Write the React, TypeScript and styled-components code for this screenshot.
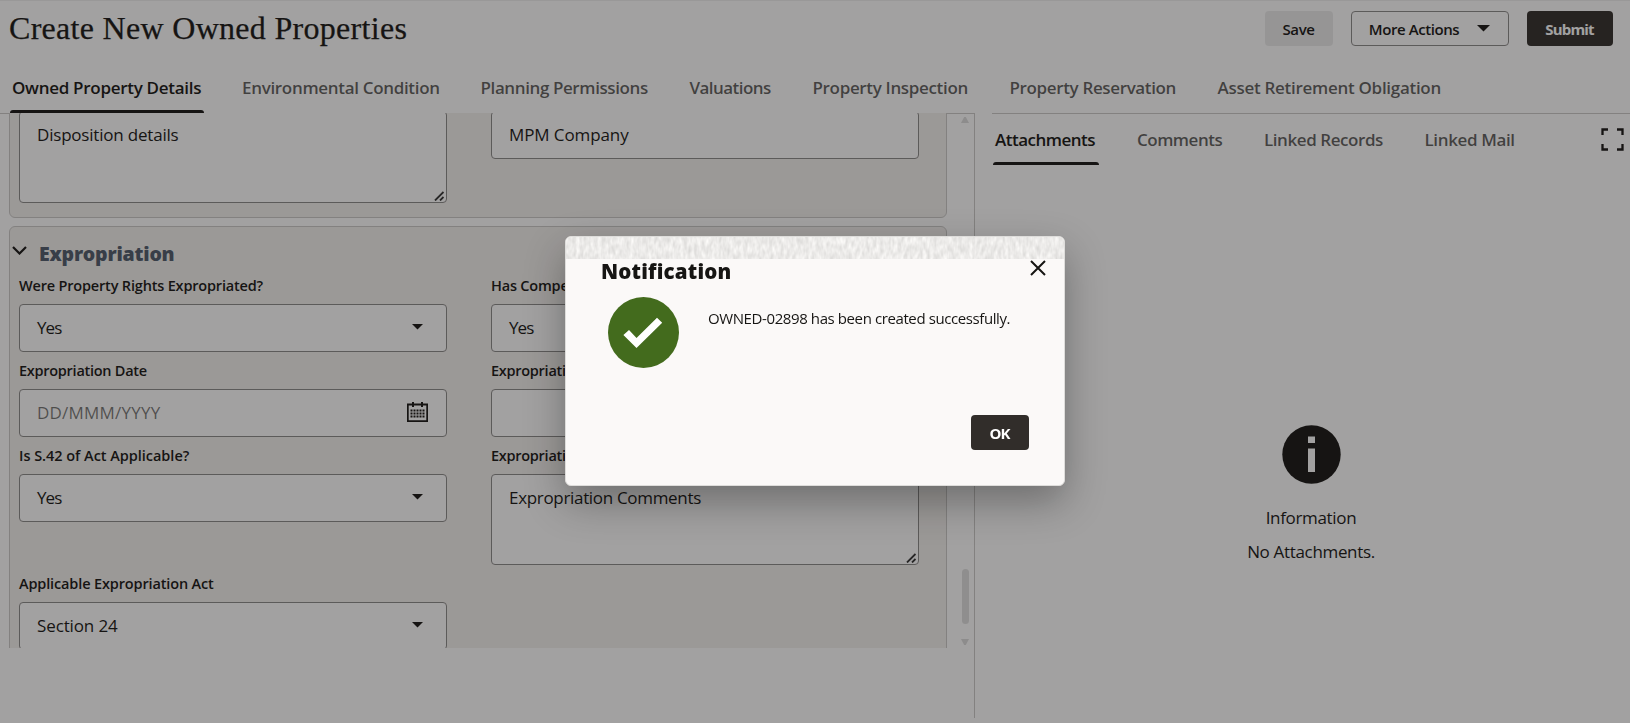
import React from 'react';
import styled, { createGlobalStyle } from 'styled-components';

const ink = '#161513';
const sans = '"Open Sans", "Noto Sans", sans-serif';

const GlobalStyle = createGlobalStyle`
  * { box-sizing: border-box; }
  body { margin: 0; background: #fff; color: ${ink}; font-family: ${sans}; overflow: hidden; }
  button { font-family: ${sans}; cursor: pointer; }
  h1, h2, p { margin: 0; }
`;

const Page = styled.div`
  height: 723px;
  display: flex;
  flex-direction: column;
  border-top: 1px solid #f1f1f1;
  white-space: nowrap;
`;

const Header = styled.header`
  height: 56px;
  display: flex;
  align-items: flex-start;
  justify-content: space-between;
  padding: 10px 17px 0 9px;
`;

const Title = styled.h1`
  font: 400 32px/35px "Liberation Serif", serif;
  letter-spacing: 0.3px;
  -webkit-text-stroke: 0.25px ${ink};
`;

const Actions = styled.div`
  display: flex;
  gap: 18px;
`;

const Button = styled.button<{ $kind: 'plain' | 'outline' | 'solid'; $w: number }>`
  width: ${(p) => p.$w}px;
  height: 35px;
  display: flex;
  align-items: center;
  justify-content: center;
  gap: 18px;
  padding: 0 1px 0 0;
  border: 1px solid ${(p) => (p.$kind === 'outline' ? '#8b8a89' : 'transparent')};
  border-radius: 4px;
  background: ${(p) => ({ plain: '#ececec', outline: '#fff', solid: '#312d2a' })[p.$kind]};
  background-clip: border-box;
  background-origin: border-box;
  color: ${(p) => (p.$kind === 'solid' ? '#fff' : ink)};
  font-size: 15px;
  font-weight: ${(p) => (p.$kind === 'solid' ? 700 : 600)};
  letter-spacing: ${(p) => (p.$kind === 'solid' ? -0.85 : -0.42)}px;
`;

const TabBar = styled.nav<{ $compact?: boolean }>`
  height: ${(p) => (p.$compact ? 51 : 56)}px;
  display: flex;
  flex: 1;
  gap: 36px;
  padding-left: ${(p) => (p.$compact ? 0.5 : 9.5)}px;
`;

const Tab = styled.a<{ $w: number; $ls: number; $active?: boolean; $top?: number }>`
  position: relative;
  width: ${(p) => p.$w + 5}px;
  padding: ${(p) => p.$top ?? 16}px 0 0 2.5px;
  font-size: 17px;
  font-weight: 600;
  line-height: 29px;
  letter-spacing: ${(p) => p.$ls}px;
  color: ${(p) => (p.$active ? ink : 'rgba(22, 21, 19, 0.7)')};
  &::after {
    content: '';
    display: ${(p) => (p.$active ? 'block' : 'none')};
    position: absolute;
    left: 0;
    right: 0;
    bottom: 0;
    height: 3px;
    border-radius: 3px 3px 0 0;
    background: ${ink};
  }
`;

const TopTabs = styled.div`
  display: flex;
  flex: none;
`;

const Body = styled.main`
  flex: 1;
  display: flex;
  gap: 17px;
  padding-bottom: 5px;
  min-height: 0;
`;

const FormPane = styled.section`
  width: 975px;
  border-top: 1px solid #cbcac8;
  border-right: 1px solid #cbcac8;
  display: flex;
  padding-left: 9px;
`;

const Scroller = styled.div`
  width: 938px;
  height: 535px;
  margin-top: -1px;
  overflow: hidden;
`;

const Scrollbar = styled.div`
  width: 8px;
  height: 528px;
  margin: 3px 0 0 14px;
  display: flex;
  flex-direction: column;
  align-items: center;
`;

const Thumb = styled.div`
  width: 7px;
  height: 55px;
  margin: auto 0 15px;
  border-radius: 4px;
  background: #e0e0e0;
`;

const Panel = styled.section`
  border: 1px solid #cbcac8;
  border-radius: 6px;
  background: #f4f2ef;
  padding: 0 0 14px 9px;
`;

const ScrolledPanel = styled(Panel)`
  height: 115px;
  margin: -10px 0 8px;
  padding-top: 7px;
`;

const Grid = styled.div`
  display: grid;
  grid-template-columns: 428px 428px;
  column-gap: 44px;
  align-items: start;
`;

const PanelHeader = styled.div`
  height: 40px;
  display: flex;
  gap: 12px;
  margin-left: -7px;
  padding-top: 13px;
  svg { margin-top: 5.5px; }
`;

const PanelTitle = styled.h2`
  font-size: 19.5px;
  font-weight: 800;
  line-height: 27px;
  letter-spacing: -0.2px;
  color: #4f5a6b;
`;

const Label = styled.label<{ $ls: number }>`
  display: block;
  height: 37px;
  padding-top: 8px;
  font-size: 14.5px;
  font-weight: 600;
  line-height: 22px;
  letter-spacing: ${(p) => p.$ls}px;
`;

const Control = styled.div<{ $h?: number; $muted?: boolean; $ls?: number }>`
  position: relative;
  height: ${(p) => p.$h ?? 48}px;
  display: flex;
  justify-content: space-between;
  padding: 0 18px 0 17px;
  border: 1px solid #8b8a89;
  border-radius: 4px;
  background: #fff;
  font-size: 17px;
  line-height: 46px;
  letter-spacing: ${(p) => p.$ls ?? -0.2}px;
  color: ${(p) => (p.$muted ? 'rgba(22, 21, 19, 0.6)' : ink)};
`;

const CaretIcon = styled.svg`
  margin: 19px 5px 0 0;
`;

const CalendarIcon = styled.svg`
  margin-top: 11px;
`;

const Grip = styled.svg`
  position: absolute;
  right: 2px;
  bottom: 1px;
`;

const SidePane = styled.aside`
  flex: 1;
  border-top: 1px solid #cbcac8;
  display: flex;
  flex-direction: column;
`;

const SideHeader = styled.div`
  display: flex;
  flex: none;
  padding-right: 6px;
  > svg { margin-top: 14px; }
`;

const Empty = styled.div`
  display: flex;
  flex-direction: column;
  align-items: center;
  padding-top: 260px;
  font-size: 17px;
  line-height: 34px;
  letter-spacing: -0.33px;
  svg { margin-bottom: 17px; }
`;

const Overlay = styled.div`
  position: fixed;
  inset: 0;
  background: rgba(22, 21, 19, 0.4);
  display: flex;
  justify-content: center;
  align-items: flex-start;
  padding-top: 236px;
`;

const Dialog = styled.div`
  width: 500px;
  height: 250px;
  display: flex;
  flex-direction: column;
  overflow: hidden;
  border: 1px solid #dedddb;
  border-radius: 6px;
  background: #fbf9f8;
  box-shadow: 0 16px 40px rgba(0, 0, 0, 0.32);
  white-space: nowrap;
`;

const Texture = styled.svg`
  display: block;
  flex: none;
`;

const DialogHeader = styled.div`
  display: flex;
  justify-content: space-between;
  height: 37px;
  padding: 0 18px 0 35px;
`;

const DialogTitle = styled.h2`
  font-size: 20.5px;
  font-weight: 800;
  line-height: 24px;
  letter-spacing: 0.2px;
`;

const DialogBody = styled.div`
  flex: 1;
  display: flex;
  gap: 29px;
  padding: 1px 0 0 42px;
`;

const Message = styled.p`
  padding-top: 8px;
  font-size: 15px;
  line-height: 26px;
  letter-spacing: -0.4px;
`;

const DialogFooter = styled.div`
  display: flex;
  justify-content: flex-end;
  padding: 0 35px 35px 0;
`;

function Caret() {
  return (
    <CaretIcon width="11" height="6"><path d="M0 0h11L5.5 5.5z" fill={ink} /></CaretIcon>
  );
}

function ResizeGrip() {
  return (
    <Grip width="10" height="10" stroke="#333" strokeWidth="1.800"><path d="M1 9.500L9.500 1M6 9.500L9.500 6" /></Grip>
  );
}

function Calendar() {
  return (
    <CalendarIcon width="21" height="22" fill={ink}>
      <path fillRule="evenodd" d="M0 2.500h5V1h2v1.500h7V1h2v1.500h5V21H0zM1.700 4.500v14.800h17.600V4.500z" />
      <path d="M5 4h2v2H5zM14 4h2v2h-2z" />
      {[8.5, 11.5, 14.5].map((y) =>
        [4, 7, 10, 13, 16].map((x) => <rect key={`${x}-${y}`} x={x - 0.5} y={y} width="2" height="2" />),
      )}
    </CalendarIcon>
  );
}

function Field({ label, ls, children }: { label: string; ls: number; children: React.ReactNode }) {
  return (
    <div>
      <Label $ls={ls}>{label}</Label>
      {children}
    </div>
  );
}

const mainTabs = [
  { text: 'Owned Property Details', w: 189, ls: -0.29 },
  { text: 'Environmental Condition', w: 197.5, ls: -0.32 },
  { text: 'Planning Permissions', w: 168, ls: -0.4 },
  { text: 'Valuations', w: 82, ls: -0.55 },
  { text: 'Property Inspection', w: 156, ls: -0.34 },
  { text: 'Property Reservation', w: 167, ls: -0.36 },
  { text: 'Asset Retirement Obligation', w: 224, ls: -0.29 },
];

const sideTabs = [
  { text: 'Attachments', w: 101, ls: -0.5 },
  { text: 'Comments', w: 86, ls: -0.5 },
  { text: 'Linked Records', w: 119.5, ls: -0.43 },
  { text: 'Linked Mail', w: 90, ls: -0.38 },
];

export default function App() {
  return (
    <>
      <GlobalStyle />
      <Page>
        <Header>
          <Title>Create New Owned Properties</Title>
          <Actions>
            <Button $kind="plain" $w={68}>Save</Button>
            <Button $kind="outline" $w={158}>
              More Actions
              <svg width="13" height="7"><path d="M0 0h13L6.500 6.500z" fill={ink} /></svg>
            </Button>
            <Button $kind="solid" $w={86}>Submit</Button>
          </Actions>
        </Header>
        <TopTabs>
          <TabBar>
            {mainTabs.map((t, i) => (
              <Tab key={t.text} $w={t.w} $ls={t.ls} $active={i === 0}>{t.text}</Tab>
            ))}
          </TabBar>
        </TopTabs>
        <Body>
          <FormPane>
            <Scroller>
              <ScrolledPanel>
                <Grid>
                  <Control $h={92}>Disposition details<ResizeGrip /></Control>
                  <Control $ls={-0.1}>MPM Company</Control>
                </Grid>
              </ScrolledPanel>
              <Panel>
                <PanelHeader>
                  <svg width="15" height="9" fill="none" stroke={ink} strokeWidth="2.2"><path d="M1 1l6.500 6.500L14 1" /></svg>
                  <PanelTitle>Expropriation</PanelTitle>
                </PanelHeader>
                <Grid>
                  <Field label="Were Property Rights Expropriated?" ls={-0.18}>
                    <Control $ls={-0.9}>Yes<Caret /></Control>
                  </Field>
                  <Field label="Has Compens." ls={-0.2}>
                    <Control $ls={-0.9}>Yes<Caret /></Control>
                  </Field>
                  <Field label="Expropriation Date" ls={-0.27}>
                    <Control $muted $ls={0.22}>DD/MMM/YYYY<Calendar /></Control>
                  </Field>
                  <Field label="Expropriation Cost" ls={-0.27}>
                    <Control />
                  </Field>
                  <Field label="Is S.42 of Act Applicable?" ls={-0.03}>
                    <Control $ls={-0.9}>Yes<Caret /></Control>
                  </Field>
                  <Field label="Expropriation Notes" ls={-0.27}>
                    <Control $h={91} $ls={-0.32}>Expropriation Comments<ResizeGrip /></Control>
                  </Field>
                  <Field label="Applicable Expropriation Act" ls={-0.14}>
                    <Control $ls={-0.12}>Section 24<Caret /></Control>
                  </Field>
                </Grid>
              </Panel>
            </Scroller>
            <Scrollbar>
              <svg width="8" height="6"><path d="M0 6h8L4.800 0h-1.600z" fill="#dcdcdc" /></svg>
              <Thumb />
              <svg width="8" height="6"><path d="M0 0h8L4.800 6h-1.600z" fill="#dcdcdc" /></svg>
            </Scrollbar>
          </FormPane>
          <SidePane>
            <SideHeader>
              <TabBar $compact>
                {sideTabs.map((t, i) => (
                  <Tab key={t.text} $w={t.w} $ls={t.ls} $active={i === 0} $top={11}>{t.text}</Tab>
                ))}
              </TabBar>
              <svg width="23" height="23" fill="none" stroke={ink} strokeWidth="2.3">
                <path d="M1.500 7V1.500H7M16 1.500H21.500V7M21.500 16V21.500H16M7 21.500H1.500V16" />
              </svg>
            </SideHeader>
            <Empty>
              <svg width="59" height="59" viewBox="0 0 59 59">
                <circle cx="29.500" cy="29.500" r="29.200" fill={ink} />
                <path d="M26 11.500h7v6.500h-7zM26 23.500h7V47h-7z" fill="#fff" />
              </svg>
              <p>Information</p>
              <p>No Attachments.</p>
            </Empty>
          </SidePane>
        </Body>
      </Page>
      <Overlay>
        <Dialog role="dialog">
          <Texture width="498" height="22">
            <filter id="weave" x="0" y="0" width="100%" height="100%" colorInterpolationFilters="sRGB">
              <feTurbulence type="fractalNoise" baseFrequency="0.28 0.12" numOctaves="2" seed="4" />
              <feColorMatrix values="0.18 0 0 0 0.835  0.18 0 0 0 0.83  0.18 0 0 0 0.823  0 0 0 0 1" />
            </filter>
            <rect width="498" height="22" filter="url(#weave)" />
          </Texture>
          <DialogHeader>
            <DialogTitle>Notification</DialogTitle>
            <svg width="16" height="18" fill="none" stroke={ink} strokeWidth="2"><path d="M1 2l14 14M15 2l-14 14" /></svg>
          </DialogHeader>
          <DialogBody>
            <svg width="71" height="71" viewBox="0 0 71 71">
              <circle cx="35.500" cy="35.500" r="35.500" fill="#436b1d" />
              <path d="M15.400 38L21 33l7.500 8L49 20.700l5.200 5L28.500 51z" fill="#fff" />
            </svg>
            <Message>OWNED-02898 has been created successfully.</Message>
          </DialogBody>
          <DialogFooter>
            <Button $kind="solid" $w={58}>OK</Button>
          </DialogFooter>
        </Dialog>
      </Overlay>
    </>
  );
}
